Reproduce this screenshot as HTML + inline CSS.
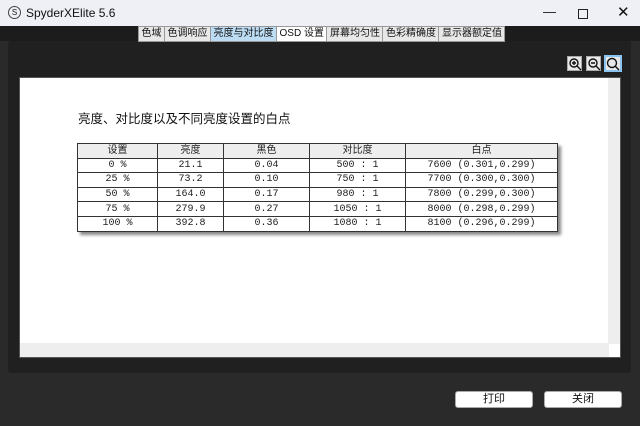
<!DOCTYPE html>
<html><head><meta charset="utf-8"><style>
*{margin:0;padding:0;box-sizing:border-box}
body{width:640px;height:426px;background:#2a2a2a;font-family:"Liberation Sans","Noto Sans CJK SC",sans-serif;position:relative;overflow:hidden}
.tb{position:absolute;left:0;top:0;width:640px;height:26px;background:#eef0f6;font-size:12px;color:#111}
.a{position:absolute}
.strip{left:0;top:26px;width:640px;height:15px;background:#1c1c1c}
.tabs{left:138px;top:26px;height:16px;display:flex}
.tabs div{background:#e8e8e8;border:1px solid #999;font-size:10px;line-height:14px;padding:0 2.5px;color:#111;margin-right:-1px}
.tabs .on{background:#bcdcf4}
.panel{left:8px;top:41px;width:623px;height:332px;background:#202020;border-radius:3px}
.content{left:19px;top:77px;width:602px;height:281px;background:#fff;border:1px solid #555}
table{position:absolute;left:77px;top:143px;border-collapse:collapse;font-family:"Liberation Mono","Noto Sans CJK SC",monospace;font-size:10px;color:#222;box-shadow:3px 3px 3px #888}
td{border:1px solid #333;text-align:center;height:14.6px;padding:0;line-height:13px}
tr:first-child td{background:#eee;font-family:"Liberation Sans","Noto Sans CJK SC",sans-serif}
.btn{top:391px;width:78px;height:17px;background:#fff;border:1px solid #aaa;border-radius:3px;font-size:11px;text-align:center;line-height:15px;color:#111}
.ic{top:56px;width:15px;height:15px;background:#e8e8e8;border:1px solid #aaa}
</style></head><body>
<div class="tb"><div class="a" style="left:8px;top:6px;width:13px;height:13px;border:1px solid #444;border-radius:50%;font-size:8px;text-align:center;line-height:11px">S</div>
<div class="a" style="left:26px;top:6px">SpyderXElite 5.6</div>
<div class="a" style="left:543px;top:4px;font-size:13px">—</div>
<div class="a" style="left:578px;top:9px;width:10px;height:10px;border:1px solid #222"></div>
<div class="a" style="left:617px;top:3px;font-size:15px">✕</div></div>
<div class="a strip"></div>
<div class="a panel"></div>
<div class="a tabs"><div>色域</div><div>色调响应</div><div class="on">亮度与对比度</div><div style="background:#fff">OSD 设置</div><div>屏幕均匀性</div><div>色彩精确度</div><div>显示器额定值</div></div>
<div class="a ic" style="left:567px"></div><div class="a ic" style="left:586px"></div><div class="a ic" style="left:604px;width:18px;height:17px;top:55px;border:2px solid #8cc4f0"></div>
<svg class="a" style="left:567px;top:56px" width="60" height="18"><g stroke="#111" fill="none" stroke-width="1.4"><circle cx="7" cy="7" r="4"/><path d="M10 10l4 4M5 7h4M7 5v4"/><circle cx="26" cy="7" r="4"/><path d="M29 10l4 4M24 7h4"/><circle cx="45" cy="7" r="4.5"/><path d="M48 10l4 4"/></g></svg>
<div class="a content">
<div class="a" style="right:0;top:0;width:12px;height:266px;background:#eee"></div>
<div class="a" style="left:0;bottom:0;width:589px;height:14px;background:#eee"></div>
</div>
<div class="a" style="left:78px;top:108px;font-size:12.5px;color:#111">亮度、对比度以及不同亮度设置的白点</div>
<table>
<tr><td style="width:80px">设置</td><td style="width:66px">亮度</td><td style="width:86px">黑色</td><td style="width:96px">对比度</td><td style="width:152px">白点</td></tr>
<tr><td>0 %</td><td>21.1</td><td>0.04</td><td>500 : 1</td><td>7600 (0.301,0.299)</td></tr>
<tr><td>25 %</td><td>73.2</td><td>0.10</td><td>750 : 1</td><td>7700 (0.300,0.300)</td></tr>
<tr><td>50 %</td><td>164.0</td><td>0.17</td><td>980 : 1</td><td>7800 (0.299,0.300)</td></tr>
<tr><td>75 %</td><td>279.9</td><td>0.27</td><td>1050 : 1</td><td>8000 (0.298,0.299)</td></tr>
<tr><td>100 %</td><td>392.8</td><td>0.36</td><td>1080 : 1</td><td>8100 (0.296,0.299)</td></tr>
</table>
<div class="a btn" style="left:455px">打印</div>
<div class="a btn" style="left:544px">关闭</div>
</body></html>
